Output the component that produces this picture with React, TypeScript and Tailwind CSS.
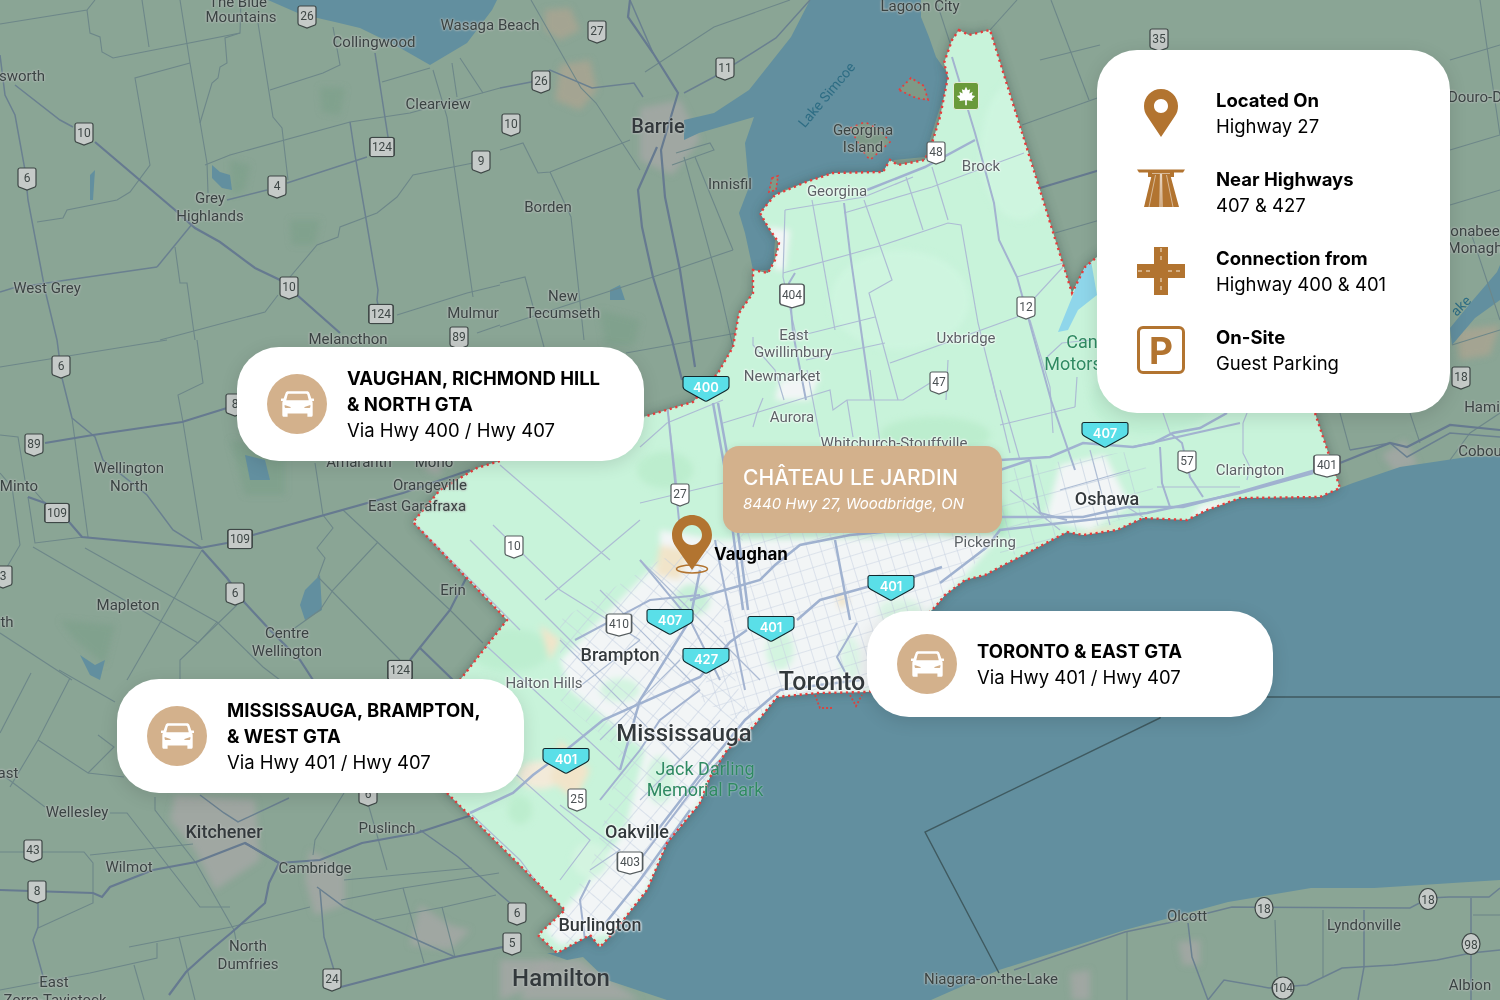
import React from "react";

const gta =
  "M959 30 969 35 990 30 1072 293 1085 267 1097 257 1200 200 1290 350 1315 413 1340 488 1320 497 1240 498 1207 510 1187 520 1143 518 1117 530 1083 535 1067 532 1033 550 1000 567 985 575 965 580 945 595 935 607 900 640 880 690 867 692 817 693 777 697 753 727 727 750 710 777 700 803 667 843 647 890 613 933 600 947 590 935 557 953 538 935 565 910 447 793 420 740 460 680 507 620 413 522 440 490 477 468 640 418 693 402 718 373 733 347 739 313 753 293 753 270 768 273 775 260 779 243 768 227 760 213 775 195 806 182 833 173 883 172 890 160 898 165 925 160 933 140 940 117 948 77 944 63 952 40Z";

const lakeOntario =
  "M1500 456 1467 457 1400 467 1353 483 1340 488 1320 497 1240 498 1207 510 1187 520 1143 518 1117 530 1083 535 1067 532 1033 550 1000 567 985 575 965 580 945 595 935 607 900 640 880 690 867 692 817 693 777 697 753 727 727 750 710 777 700 803 667 843 647 890 613 933 600 947 590 935 557 953 547 953 567 960 583 957 607 980 667 1000 931 1000 999 970 1125 930 1228 902 1311 888 1374 888 1500 880Z";
const lakeSimcoe =
  "M810 0 921 0 921 17 929 37 936 57 950 77 936 120 929 143 925 157 894 160 883 173 833 173 783 190 760 213 775 240 773 270 753 270 745 233 739 213 749 187 745 143 754 117 699 133 684 140 684 120 714 113 749 90 791 37Z";
const georgianBay = "M268 0 300 14 335 22 360 28 395 45 430 65 467 43 492 10 497 0Z";

const dimThin = [
  "M0 24 87 10 95 0",
  "M87 10 90 33 100 37 102 52 113 58 240 33 241 0",
  "M240 33 225 38 227 63 220 67 218 78 212 83 200 123",
  "M180 0 190 63 207 163 208 193",
  "M142 0 149 47",
  "M190 63 135 78 150 165 130 192 117 200 67 210 63 218 37 222",
  "M258 23 273 117 282 128 288 180",
  "M270 90 323 73 340 65 333 27",
  "M205 165 230 155 350 122 410 113 500 88",
  "M382 82 430 68",
  "M433 70 447 117 473 297",
  "M452 63 457 97",
  "M460 58 483 93",
  "M473 163 413 175 397 197 377 213 340 227 338 237 317 245 290 277",
  "M175 247 180 283 187 283 195 340",
  "M278 295 265 312 160 340",
  "M397 315 467 293 500 285",
  "M477 333 500 325",
  "M0 367 167 340",
  "M72 418 88 537",
  "M197 340 203 383 178 395 183 422 202 540",
  "M0 473 12 487 20 545 7 567",
  "M0 435 18 437 25 480 45 503",
  "M28 497 35 543 83 537",
  "M33 547 198 643 217 622",
  "M85 548 217 622 263 667 280 680",
  "M0 633 72 680",
  "M202 550 127 680",
  "M237 605 180 660 180 680",
  "M315 463 323 515 333 528 317 548 325 558 318 577 400 660",
  "M343 510 450 610 483 643",
  "M378 542 333 590 320 610 292 630",
  "M59 670 115 702",
  "M31 673 0 733",
  "M70 678 38 740 10 787",
  "M38 740 88 773 124 777",
  "M98 735 114 747 88 773",
  "M0 773 45 807",
  "M110 813 127 813 200 907 230 907",
  "M0 852 84 852 93 863 93 903 38 928",
  "M90 855 193 844",
  "M155 797 155 810 196 863 234 930 238 950",
  "M129 947 231 927 310 907",
  "M344 793 315 840 313 855",
  "M365 793 387 870",
  "M341 900 403 888 499 873",
  "M344 880 472 868",
  "M375 920 444 907 496 895",
  "M403 888 424 963",
  "M442 907 455 957",
  "M179 937 195 1000",
  "M134 965 145 1003",
  "M157 943 157 958 90 973 0 990",
  "M531 0 581 88 596 103 640 170",
  "M645 72 714 27 790 0",
  "M500 150 523 143 538 173 550 172 630 140",
  "M550 172 571 217 584 340",
  "M676 153 710 143 714 150 672 165",
  "M695 157 733 250",
  "M733 250 653 277 500 327",
  "M500 283 525 277 544 347",
  "M626 353 737 333",
  "M684 157 720 290 733 347",
  "M1017 0 990 30",
  "M936 0 950 43",
  "M1051 0 1089 100",
  "M1022 125 1100 97",
  "M1040 60 1100 45",
  "M1055 233 1100 220",
  "M1127 932 1127 1000",
  "M1275 920 1277 977",
  "M1323 910 1323 977",
  "M1473 915 1500 915",
  "M1340 413 1350 450",
  "M1410 413 1420 443",
  "M1500 413 1470 433 1450 460",
  "M1450 60 1500 45",
  "M1450 150 1500 135 1480 0",
  "M1450 205 1500 190",
  "M1470 230 1500 320",
  "M1452 345 1500 330",
];
const dimMid = [
  "M350 122 355 155 365 213 378 290 377 300 381 320",
  "M375 53 388 137",
  "M287 183 367 157",
  "M227 200 267 190",
  "M157 267 193 223",
  "M0 292 13 288 67 280 157 267",
  "M72 418 95 437 103 460 147 495 173 530 202 548",
  "M0 55 5 95 15 115 25 170 28 200 45 290 57 340 62 378 72 418",
  "M15 85 60 120 73 127",
  "M38 903 38 927 33 940 46 987",
  "M200 795 224 813 238 822 289 798",
  "M420 830 458 857 510 903",
  "M317 887 344 907 455 957",
  "M320 890 324 937 337 980",
  "M1188 923 1192 957 1208 1000 1224 980 1269 988 1307 985 1342 968 1394 965 1437 960 1471 953 1500 950",
  "M1364 910 1364 967 1358 1000",
  "M1471 898 1471 1000",
  "M1014 970 1125 932 1168 923 1208 913 1232 907 1410 908 1429 898 1449 897 1489 897 1500 888",
  "M1350 450 1390 443 1407 457 1450 433 1500 437",
  "M653 53 630 0",
  "M500 88 531 82 550 70 592 88 634 83 643 97",
  "M684 93 714 77 776 38 810 0",
];
const dimMain = [
  "M95 142 175 210 195 228 220 242 255 268 280 280 340 333",
  "M45 443 93 435 182 422 227 408",
  "M28 497 45 503 70 523 82 537 200 548 227 543 253 535 403 493 470 470",
  "M202 550 227 578 245 603 270 630 300 660 313 680",
  "M493 525 450 610 410 660",
  "M420 648 453 680",
  "M0 890 93 893 102 897 110 887 153 870 196 862 245 843 279 863 269 883 265 903 231 933 207 953 186 972 169 995",
  "M245 843 279 863 320 860 362 843 417 833 472 815",
  "M341 987 455 957 503 947",
  "M630 0 628 17 653 53 678 93 661 150 665 197 680 270 695 367",
  "M657 147 638 190 642 227 653 277 672 340 682 380",
  "M1340 463 1390 443 1407 447 1450 425 1500 430",
  "M994 202 1040 188 1100 170",
];

const brightThin = [
  "M785 210 864 197 913 177",
  "M844 213 932 187 1024 153",
  "M785 210 783 277 797 340",
  "M783 273 883 245 948 223 961 225 978 323 997 400",
  "M812 200 835 330",
  "M864 200 892 280 869 293 898 400",
  "M906 177 923 230",
  "M932 167 948 220",
  "M890 363 1017 317 1063 267",
  "M1017 277 1063 263",
  "M753 337 753 345 775 370 784 400",
  "M795 337 875 317",
  "M806 360 885 343",
  "M948 360 946 400",
  "M667 403 677 487",
  "M723 423 830 390 833 410 847 400 903 400 930 383",
  "M753 427 757 413 763 398",
  "M807 370 820 437",
  "M847 400 853 437",
  "M870 370 880 443",
  "M990 370 1010 453",
  "M1000 390 1020 460",
  "M640 447 667 423 723 400",
  "M640 503 723 483",
  "M413 522 520 630",
  "M493 525 560 590 640 640",
  "M500 465 610 560",
  "M470 540 540 610 590 660",
  "M480 640 545 700 620 770",
  "M545 600 640 520",
  "M560 805 620 850 590 870",
  "M500 760 590 840 560 880",
  "M472 815 520 860 550 900",
  "M1030 320 1050 387 1053 433",
  "M1047 357 1062 343 1090 340",
  "M1075 407 1000 425",
  "M1077 377 1075 407",
  "M1163 413 1170 433",
  "M1247 413 1243 423",
  "M1157 487 1240 487",
  "M1243 423 1243 453 1250 467 1247 480",
  "M1127 507 1143 517",
  "M1033 503 1047 520",
  "M600 590 700 690",
  "M560 640 680 760",
  "M640 560 760 680",
  "M575 690 640 640",
  "M600 740 680 660",
  "M640 800 720 720",
  "M1010 490 1060 530",
  "M1090 450 1110 525",
  "M1060 490 1130 470",
];
const brightMid = [
  "M952 57 975 133 994 203 999 240 1017 277 1051 400 1075 470",
  "M850 253 860 323 871 400",
  "M844 203 850 253",
  "M795 273 789 283 793 333 806 400",
  "M667 403 680 530",
  "M1160 447 1162 483 1170 507",
  "M1170 433 1182 443 1190 477 1203 497",
  "M1030 460 1040 513 1067 520",
  "M1133 447 1240 423",
  "M600 800 640 750 660 720 700 690",
  "M590 880 580 900 585 940",
  "M640 860 700 780 745 735",
  "M857 623 837 657 845 672",
  "M640 560 690 620 720 680",
  "M575 640 650 600 700 595",
  "M715 540 735 640 745 690",
];
const brightMain = [
  "M713 403 725 470 743 610",
  "M718 403 730 470 748 610",
  "M867 190 925 167 975 140",
  "M470 813 513 793 533 775 560 755 603 720 700 677 730 642 747 630",
  "M797 620 820 600 867 587 913 577 942 567",
  "M940 583 987 547 1000 530 1070 522 1147 513 1240 493 1313 473",
  "M1000 517 1083 517 1127 507 1183 507 1240 492 1340 463",
  "M1000 460 1050 457 1083 443 1133 447 1153 443 1173 433 1200 428 1227 413",
  "M1000 470 1030 460",
  "M620 770 640 700 690 620 700 570",
  "M690 600 760 580 775 565 800 545 850 535 960 525",
  "M600 930 640 880 690 810",
  "M650 840 700 775 745 720 780 690 860 680",
  "M835 540 850 620",
];

const urban = [
  "M660 530 720 540 1000 535 970 570 935 607 900 640 880 690 780 697 753 727 727 750 710 777 700 803 667 843 647 890 613 933 560 945 545 930 590 880 625 830 645 750 570 690 560 660 620 600 660 560Z",
  "M1060 465 1105 455 1130 505 1090 530 1045 520Z",
  "M1218 500 1240 505 1190 520 1200 505Z",
  "M780 380 820 375 810 400 775 400Z",
  "M768 227 790 230 785 270 775 270Z",
];
const beige = [
  "M660 545 690 550 680 580 655 575Z",
  "M560 740 590 770 575 800 550 780Z",
  "M540 625 560 640 550 660Z",
  "M835 590 850 600 840 610Z",
  "M1075 535 1120 525 1100 538Z",
  "M1210 510 1235 500 1205 520Z",
];
const greyPatches = [
  "M640 108 680 100 700 140 672 175 640 160Z",
  "M175 795 255 800 260 860 215 890 195 850 170 820Z",
  "M310 850 345 870 345 905 315 915 305 880Z",
  "M1070 973 1090 970 1090 1000 1072 1000Z",
  "M1178 942 1200 940 1200 965 1183 965Z",
  "M540 960 580 960 640 1000 520 1000Z",
  "M1382 455 1405 440 1418 465 1395 472Z",
  "M430 400 450 410 440 475 425 470Z",
  "M555 960 540 985 500 1000 500 960Z",
  "M420 905 450 925 470 930 450 950 410 945Z",
];
const tanPatches = [
  "M545 10 570 8 580 30 560 40 545 30Z",
  "M560 65 590 60 597 90 580 110 555 100Z",
  "M1455 330 1500 325 1490 355 1460 360Z",
];
const forest = [
  "M230 160 250 165 245 190 232 195Z",
  "M320 87 345 88 340 115 322 112Z",
  "M290 220 320 220 315 245 292 245Z",
  "M230 440 285 450 285 495 245 495Z",
  "M60 620 115 625 105 665 75 640Z",
  "M600 310 640 320 635 345 605 345Z",
];
const smallLakes = [
  "M212 165 220 172 230 175 232 190 222 188 212 178Z",
  "M245 455 265 460 270 480 250 480Z",
  "M90 175 95 170 93 200 90 200Z",
  "M305 590 320 575 322 610 305 620 300 605Z",
  "M80 655 95 665 105 660 100 680 90 675Z",
  "M610 290 620 285 625 300 610 300Z",
];

type LabelT = [string, number, number, number?, string?];
const labels: LabelT[] = [
  ["The Blue", 238, 2], ["Mountains", 241, 17], ["Wasaga Beach", 490, 25], ["Collingwood", 374, 42],
  ["Lagoon City", 920, 6], ["Clearview", 438, 104], ["Barrie", 658, 126, 20, "m"], ["sworth", 22, 76],
  ["Grey", 210, 198], ["Highlands", 210, 216], ["Borden", 548, 207], ["Innisfil", 730, 184],
  ["Georgina", 863, 130], ["Island", 863, 147], ["West Grey", 47, 288], ["New", 563, 296],
  ["Tecumseth", 563, 313], ["Mulmur", 473, 313], ["Melancthon", 348, 339], ["Wellington", 129, 468],
  ["North", 129, 486], ["Minto", 19, 486], ["Amaranth", 359, 462], ["Mono", 434, 462],
  ["Erin", 453, 590], ["Mapleton", 128, 605], ["Centre", 287, 633], ["Wellington", 287, 651],
  ["th", 7, 622], ["Kitchener", 224, 832, 18, "m"], ["Puslinch", 387, 828], ["Wellesley", 77, 812],
  ["Wilmot", 129, 867], ["Cambridge", 315, 868], ["North", 248, 946], ["Dumfries", 248, 964],
  ["East", 54, 982], ["Zorra-Tavistock", 55, 1000], ["ast", 8, 773], ["Olcott", 1187, 916],
  ["Lyndonville", 1364, 925], ["Albion", 1470, 985], ["Niagara-on-the-Lake", 991, 979],
  ["Douro-D", 1475, 97], ["onabee", 1475, 231], ["Monagh", 1475, 248], ["Hami", 1482, 407],
  ["Cobou", 1480, 451], ["Hamilton", 561, 978, 24, "m"], ["Orangeville", 430, 485], ["East Garafraxa", 417, 506],
];
const brightLabels: LabelT[] = [
  ["Georgina", 837, 191], ["Brock", 981, 166], ["East", 794, 335], ["Gwillimbury", 793, 352],
  ["Newmarket", 782, 376], ["Uxbridge", 966, 338], ["Aurora", 792, 417], ["Whitchurch-Stouffville", 894, 443],
  ["Clarington", 1250, 470], ["Oshawa", 1107, 499, 18, "m"],
  ["Pickering", 985, 542], ["Brampton", 620, 655, 18, "m"], ["Halton Hills", 544, 683], ["Toronto", 822, 681, 25, "m"],
  ["Mississauga", 684, 733, 24, "m"], ["Oakville", 637, 832, 18, "m"], ["Burlington", 600, 925, 18, "m"],
];

type ShieldT = [string, number, number, number?, number?];
const dimShields: ShieldT[] = [
  ["26", 307, 17], ["27", 597, 32], ["26", 541, 82], ["11", 725, 69], ["10", 84, 134], ["10", 511, 125],
  ["124", 382, 147, 27, 21], ["9", 481, 162], ["6", 27, 179], ["4", 277, 187], ["10", 289, 288],
  ["124", 381, 314, 27, 21], ["89", 459, 338], ["6", 61, 367], ["89", 34, 445], ["8", 235, 405],
  ["109", 57, 513, 27, 21], ["109", 240, 539, 27, 21], ["6", 235, 594], ["3", 3, 577],
  ["124", 400, 670, 27, 21], ["43", 33, 851], ["8", 37, 892], ["24", 332, 980], ["6", 517, 914],
  ["5", 512, 944], ["35", 1159, 40], ["18", 1461, 378], ["6", 368, 795],
];
const whiteShields: ShieldT[] = [
  ["48", 936, 153], ["404", 792, 296, 27, 26], ["12", 1026, 308], ["47", 939, 383], ["27", 680, 495],
  ["10", 514, 547], ["410", 619, 625, 28, 24], ["25", 577, 800], ["403", 630, 863, 28, 24], ["57", 1187, 462],
  ["401", 1327, 466, 29, 24],
];
const cyanShields: ShieldT[] = [
  ["400", 706, 389], ["407", 1105, 435], ["401", 891, 588], ["407", 670, 622], ["401", 771, 629],
  ["427", 706, 661], ["401", 566, 761],
];
const roundShields: ShieldT[] = [
  ["18", 1264, 908, 20, 23], ["18", 1428, 899, 20, 23], ["98", 1471, 944, 20, 23], ["104", 1283, 988, 24, 24],
];

const MapLabel = ({ item, bright }: { item: LabelT; bright?: boolean }) => {
  const [t, x, y, size = 15, w] = item;
  return (
    <span
      className={`absolute -translate-x-1/2 -translate-y-1/2 whitespace-nowrap font-[Roboto,sans-serif] leading-none ${
        bright
          ? "text-[#5c6266] [text-shadow:0_0_2px_#fff,0_0_2px_#fff,0_0_3px_#fff]"
          : "text-[#3a4443] [text-shadow:0_0_2px_#b3b9b6,0_0_2px_#b3b9b6,0_0_3px_#b3b9b6]"
      } ${w === "m" ? "font-medium !text-[#33393c]" : ""}`}
      style={{ left: x, top: y, fontSize: size }}
    >
      {t}
    </span>
  );
};

const Shield = ({ item, kind }: { item: ShieldT; kind: "dim" | "white" | "cyan" | "round" }) => {
  const [t, x, y, w, h] = item;
  const width = w ?? (kind === "cyan" ? 48 : 20);
  const height = h ?? (kind === "cyan" ? 27 : 24);
  return (
    <div
      className="absolute -translate-x-1/2 -translate-y-1/2 flex items-center justify-center"
      style={{ left: x, top: y, width, height }}
    >
      <svg className="absolute inset-0 w-full h-full" viewBox={kind === "cyan" ? "0 0 48 27" : "0 0 20 24"} preserveAspectRatio="none">
        {kind === "cyan" && (
          <path d="M3 1H45C46.5 1 47 2 47 3V11C47 13 46 14 44 15L26 25C25 25.7 23 25.7 22 25L4 15C2 14 1 13 1 11V3C1 2 1.5 1 3 1Z" fill="#5adfe8" stroke="#12282c" strokeWidth="1.1" />
        )}
        {kind === "round" && <ellipse cx="10" cy="12" rx="9" ry="11" fill="#c5cac8" stroke="#3e4746" strokeWidth="1.2" />}
        {(kind === "dim" || kind === "white") && (
          <path
            d={h === 21 ? "M3 1H17C18 1 19 2 19 3V21C19 22 18 23 17 23H3C2 23 1 22 1 21V3C1 2 2 1 3 1Z" : "M3 1H17C18 1 19 2 19 3V18C19 19 18.5 19.5 18 20L10 23L2 20C1.5 19.5 1 19 1 18V3C1 2 2 1 3 1Z"}
            fill={kind === "dim" ? "#c5cac8" : "#fff"}
            stroke={kind === "dim" ? "#3e4746" : "#555c5e"}
            strokeWidth="1.2"
          />
        )}
      </svg>
      {kind === "cyan" ? (
        <span className="relative pb-[3px] font-[Inter,sans-serif] text-[13px] font-semibold text-white">{t}</span>
      ) : (
        <span className={`relative font-[Roboto,sans-serif] text-[12px] ${kind === "white" ? "text-[#4b5154]" : "text-[#3e4746]"} ${kind === "round" ? "" : "pb-[2px]"}`}>{t}</span>
      )}
    </div>
  );
};

const MapBackground = () => (
  <div className="absolute inset-0 blur-[0.4px]">
    <svg className="absolute inset-0" width="1500" height="1000" viewBox="0 0 1500 1000">
      <defs>
        <clipPath id="gtaClip">
          <path d={gta} />
        </clipPath>
        <filter id="soft" x="-10%" y="-10%" width="120%" height="120%">
          <feGaussianBlur stdDeviation="6" />
        </filter>
        <filter id="patch" x="-10%" y="-10%" width="120%" height="120%">
          <feGaussianBlur stdDeviation="3" />
        </filter>
        <pattern id="gridT" width="13" height="13" patternUnits="userSpaceOnUse" patternTransform="rotate(-17)">
          <path d="M13 0H0V13" fill="none" stroke="#c8d2e2" strokeWidth="1.1" />
        </pattern>
        <pattern id="gridM" width="16" height="16" patternUnits="userSpaceOnUse" patternTransform="rotate(40)">
          <path d="M16 0H0V16" fill="none" stroke="#c2cde0" strokeWidth="1.1" />
        </pattern>
        <pattern id="gridD" width="22" height="22" patternUnits="userSpaceOnUse" patternTransform="rotate(-15)">
          <path d="M22 0H0V22" fill="none" stroke="#b6c5da" strokeWidth="1" />
        </pattern>
      </defs>

      <rect width="1500" height="1000" fill="#8aa595" />
      <g filter="url(#patch)">
        {forest.map((d, i) => (
          <path key={i} d={d} fill="#7c9e88" opacity="0.6" />
        ))}
        {greyPatches.map((d, i) => (
          <path key={i} d={d} fill="#a3a7a4" opacity="0.85" />
        ))}
        {tanPatches.map((d, i) => (
          <path key={i} d={d} fill="#a4a492" />
        ))}
      </g>
      {smallLakes.map((d, i) => (
        <path key={i} d={d} fill="#628f9f" />
      ))}
      <path d={georgianBay} fill="#628f9f" />
      <path d={lakeSimcoe} fill="#628f9f" />
      <path d="M1450 328 1473 300 1497 272 1500 265 1500 300 1475 318 1452 345Z" fill="#628f9f" />
      <path d={lakeOntario} fill="#628f9f" />
      <path d="M1500 697H1163L1160 718 925 832 999 973" fill="none" stroke="#3f5a60" strokeWidth="1.4" />

      {dimThin.map((d, i) => (
        <path key={i} d={d} fill="none" stroke="#6d8789" strokeWidth="1.1" />
      ))}
      {dimMid.map((d, i) => (
        <path key={i} d={d} fill="none" stroke="#6a8090" strokeWidth="1.5" />
      ))}
      {dimMain.map((d, i) => (
        <path key={i} d={d} fill="none" stroke="#667a90" strokeWidth="2.2" />
      ))}

      <path d={gta} fill="#2c4440" opacity="0.45" filter="url(#soft)" />
      <path d={gta} fill="#c8f3da" />

      <g clipPath="url(#gtaClip)">
        <g filter="url(#patch)">
          <ellipse cx="900" cy="300" rx="70" ry="50" fill="#cef5df" />
          <ellipse cx="1020" cy="150" rx="40" ry="70" fill="#cef5df" />
          <ellipse cx="850" cy="160" rx="35" ry="12" fill="#bdeed0" />
          <ellipse cx="1150" cy="400" rx="60" ry="35" fill="#bdeed0" opacity="0.6" />
          <ellipse cx="935" cy="435" rx="55" ry="18" fill="#bcedce" />
          <ellipse cx="665" cy="470" rx="28" ry="18" fill="#bcedce" />
          <ellipse cx="770" cy="480" rx="40" ry="30" fill="#c1f0d3" />
          <ellipse cx="975" cy="520" rx="35" ry="26" fill="#b1e9c6" />
          <ellipse cx="510" cy="650" rx="40" ry="22" fill="#bdeed0" />
          <ellipse cx="520" cy="810" rx="12" ry="14" fill="#bcedce" />
          {urban.map((d, i) => (
            <path key={i} d={d} fill="#f2f5f6" />
          ))}
          <ellipse cx="620" cy="690" rx="20" ry="12" fill="#d3f4e0" />
          <ellipse cx="780" cy="650" rx="14" ry="20" fill="#d3f4e0" />
          <ellipse cx="850" cy="660" rx="10" ry="24" fill="#dcf5e6" />
          <ellipse cx="900" cy="610" rx="22" ry="12" fill="#dcf5e6" />
          <ellipse cx="660" cy="780" rx="14" ry="24" fill="#d3f4e0" />
          <ellipse cx="590" cy="860" rx="18" ry="18" fill="#d3f4e0" />
          <ellipse cx="692" cy="600" rx="18" ry="16" fill="#c8f0d8" />
          <ellipse cx="540" cy="775" rx="22" ry="14" fill="#f2ead9" />
          {beige.map((d, i) => (
            <path key={i} d={d} fill="#f1e4c9" />
          ))}
        </g>
        <path d="M745 530 1000 530 970 570 935 607 900 640 880 690 780 697 753 727 700 700 720 640Z" fill="url(#gridT)" />
        <path d="M560 620 660 560 745 530 720 640 753 727 727 750 710 777 700 803 667 843 647 890 613 933 560 945 545 930 590 870 610 800 620 750 560 700Z" fill="url(#gridM)" />
        <path d="M1000 470 1140 450 1160 510 1080 530 1000 560Z" fill="url(#gridD)" />
        <path d="M1090 255 1082 268 1073 295 1062 322 1058 332 1068 330 1078 310 1097 295Z" fill="#8fd6ea" />
        {brightThin.map((d, i) => (
          <path key={i} d={d} fill="none" stroke="#adbcd4" strokeWidth="1.2" />
        ))}
        {brightMid.map((d, i) => (
          <path key={i} d={d} fill="none" stroke="#a3b3d0" strokeWidth="2" />
        ))}
        {brightMain.map((d, i) => (
          <path key={i} d={d} fill="none" stroke="#a0b2d0" strokeWidth="2.5" />
        ))}
      </g>

      <path d={gta} fill="none" stroke="#e83c3c" strokeWidth="2.4" strokeDasharray="2.2 3.6" />
      <path d="M899 90 911 78 924 86 928 100 916 98Z" fill="#7e9a88" stroke="#e83c3c" strokeWidth="1.8" strokeDasharray="2 3" />
      <path d="M772 178 778 176 776 190 769 192Z" fill="#7e9a88" stroke="#e83c3c" strokeWidth="1.6" strokeDasharray="2 2.5" />
      <path d="M850 128 865 122 880 130 890 142 870 160 862 150Z" fill="#7e9a88" stroke="#e83c3c" strokeWidth="1.6" strokeDasharray="2 4" />
      <path d="M815 695 820 708 832 708M850 695 856 706 862 695" fill="none" stroke="#d9443f" strokeWidth="1.8" strokeDasharray="2 2" />
    </svg>

    {labels.map((l, i) => (
      <MapLabel key={i} item={l} />
    ))}
    {brightLabels.map((l, i) => (
      <MapLabel key={i} item={l} bright />
    ))}
    <span className="absolute left-[827px] top-[95px] -translate-x-1/2 -translate-y-1/2 -rotate-[50deg] whitespace-nowrap font-[Roboto,sans-serif] text-[14px] text-[#2e6d84]">
      Lake Simcoe
    </span>
    <span className="absolute left-[1461px] top-[306px] -translate-x-1/2 -translate-y-1/2 -rotate-[45deg] font-[Roboto,sans-serif] text-[14px] text-[#2e6d84]">
      ake
    </span>
    {[
      ["Jack Darling", 705, 769],
      ["Memorial Park", 705, 790],
      ["Can", 1082, 342],
      ["Motors", 1073, 364],
    ].map(([t, x, y]) => (
      <span
        key={t as string}
        className="absolute -translate-x-1/2 -translate-y-1/2 whitespace-nowrap font-[Roboto,sans-serif] text-[18px] leading-none text-[#2f8a62] [text-shadow:0_0_2px_#ffffffb0]"
        style={{ left: x as number, top: y as number }}
      >
        {t}
      </span>
    ))}
    {dimShields.map((s, i) => (
      <Shield key={i} item={s} kind="dim" />
    ))}
    {whiteShields.map((s, i) => (
      <Shield key={i} item={s} kind="white" />
    ))}
    {roundShields.map((s, i) => (
      <Shield key={i} item={s} kind="round" />
    ))}
    <div className="absolute left-[953px] top-[82px] flex h-[28px] w-[26px] items-center justify-center rounded-[3px] border border-[#e5ecd9] bg-[#6a9a3a]">
      <svg viewBox="0 0 24 24" className="h-[20px] w-[20px]" fill="#fff">
        <path d="M12 1 14 5 17 4 16 9 20 7 19 11 23 12 19 16 20 18 13 17 13 23 11 23 11 17 4 18 5 16 1 12 5 11 4 7 8 9 7 4 10 5Z" />
      </svg>
    </div>
    {cyanShields.map((s, i) => (
      <Shield key={i} item={s} kind="cyan" />
    ))}
  </div>
);

const CarIcon = () => (
  <svg viewBox="0 0 100 78" className="h-[26px] w-[33px]" fill="#fff" fillRule="evenodd">
    <path d="M22 0H78C82 0 85 2 86 6L92 22H98C100 22 100 24 100 26V30H94C96 32 96 36 96 38V72C96 76 94 78 90 78H80V68H20V78H10C6 78 4 76 4 72V38C4 36 4 32 6 30H0V26C0 24 0 22 2 22H8L14 6C15 2 18 0 22 0ZM24 8C22 8 21 9 20 11L16 28H84L80 11C79 9 78 8 76 8ZM11 42V47C11 49 13 51 15 51H29V48ZM89 42V47C89 49 87 51 85 51H71V48Z" />
  </svg>
);

const RouteCard = ({ title, via, className }: { title: string[]; via: string; className: string }) => (
  <div className={`absolute flex items-center rounded-[42px] bg-white pl-[30px] shadow-[0_4px_18px_rgba(0,0,0,0.12)] ${className}`}>
    <div className="flex h-[60px] w-[60px] shrink-0 items-center justify-center rounded-full bg-[#d3b18c]">
      <CarIcon />
    </div>
    <div className="ml-[20px] text-[18.5px] leading-[26px] text-black">
      {title.map((t) => (
        <div key={t} className="text-[18.5px] font-bold">
          {t}
        </div>
      ))}
      <div>{via}</div>
    </div>
  </div>
);

const PinIcon = ({ className }: { className: string }) => (
  <svg viewBox="0 0 34 48" className={className} fill="#b27430" fillRule="evenodd">
    <path d="M17 0C7.6 0 0 7.6 0 17C0 21 1 24 3 27L17 48L31 27C33 24 34 21 34 17C34 7.6 26.4 0 17 0ZM17 10C21 10 24 13 24 17C24 21 21 24 17 24C13 24 10 21 10 17C10 13 13 10 17 10Z" />
  </svg>
);

const HighwayIcon = () => (
  <svg viewBox="0 0 48 38" className="mb-[8px] h-[38px] w-[48px]">
    <path d="M0 0.500H48L46 3.500H37V8H33V4.500H15V8H11V3.500H2Z" fill="#b27430" />
    <path d="M15 5H33L42 38H7Z" fill="#b27430" />
    <path d="M23.400 5 23 38M24.600 5 25 38" stroke="#fff" strokeWidth="0.8" fill="none" />
    <path d="M18.500 6 12 38M29.500 6 36 38" stroke="#fff" strokeWidth="0.5" fill="none" />
  </svg>
);

const CrossIcon = () => (
  <svg viewBox="0 0 48 48" className="h-12 w-12">
    <path d="M17 0H31V17H48V31H31V48H17V31H0V17H17Z" fill="#b27430" />
    <path d="M24 1V17M24 31V47M1 24H17M31 24H47" stroke="#f6ead9" strokeWidth="1" strokeDasharray="4 4" fill="none" />
  </svg>
);

const features = [
  { a: "Located On", b: "Highway 27", icon: <PinIcon className="h-[48px] w-[34px]" /> },
  { a: "Near Highways", b: "407 & 427", icon: <HighwayIcon /> },
  { a: "Connection from", b: "Highway 400 & 401", icon: <CrossIcon /> },
  {
    a: "On-Site",
    b: "Guest Parking",
    icon: (
      <div className="flex h-12 w-12 items-center justify-center rounded-[6px] border-[3px] border-[#b27430] text-[37px] font-bold leading-none text-[#b27430]">
        P
      </div>
    ),
  },
];

export default function App() {
  return (
    <div className="relative h-[1000px] w-[1500px] overflow-hidden bg-[#8aa595] font-[Inter,sans-serif]">
      <MapBackground />

      {/* site pin */}
      <div className="absolute left-[672px] top-[515px]">
        <svg viewBox="0 0 40 60" className="h-[60px] w-[40px]">
          <ellipse cx="20" cy="54" rx="15.5" ry="4" fill="none" stroke="#b27430" strokeWidth="1.5" />
          <path
            fill="#b27430"
            fillRule="evenodd"
            d="M20 0C9 0 0 9 0 20C0 25 1.500 28 4 32L20 55L36 32C38.500 28 40 25 40 20C40 9 31 0 20 0ZM20 10C25.500 10 30 14.500 30 20C30 25.500 25.500 30 20 30C14.500 30 10 25.500 10 20C10 14.500 14.500 10 20 10Z"
          />
        </svg>
      </div>
      <span className="absolute left-[714px] top-[543px] text-[17px] font-bold leading-[22px] text-black">Vaughan</span>

      <div className="absolute left-[723px] top-[446px] flex h-[87px] w-[279px] flex-col justify-center rounded-[16px] bg-[#d3b18c] pl-[20px] text-white shadow-[0_2px_8px_rgba(0,0,0,0.12)]">
        <div className="text-[21px] font-medium leading-[28px] tracking-[0.1px]">CHÂTEAU LE JARDIN</div>
        <div className="text-[15px] italic leading-[24px]">8440 Hwy 27, Woodbridge, ON</div>
      </div>

      <RouteCard className="left-[237px] top-[347px] h-[114px] w-[407px]" title={["VAUGHAN, RICHMOND HILL", "& NORTH GTA"]} via="Via Hwy 400 / Hwy 407" />
      <RouteCard className="left-[117px] top-[679px] h-[114px] w-[407px]" title={["MISSISSAUGA, BRAMPTON,", "& WEST GTA"]} via="Via Hwy 401 / Hwy 407" />
      <RouteCard className="left-[867px] top-[611px] h-[106px] w-[406px]" title={["TORONTO & EAST GTA"]} via="Via Hwy 401 / Hwy 407" />

      <div className="absolute left-[1097px] top-[50px] flex h-[363px] w-[353px] flex-col justify-between rounded-[40px] bg-white px-[40px] py-[37px] shadow-[0_4px_18px_rgba(0,0,0,0.12)]">
        {features.map((f) => (
          <div key={f.a} className="flex h-[52px] items-center">
            <div className="flex w-[48px] shrink-0 justify-center">{f.icon}</div>
            <div className="ml-[31px] whitespace-nowrap text-[18.5px] leading-[26px] text-black">
              <div className="text-[18.5px] font-bold">{f.a}</div>
              <div>{f.b}</div>
            </div>
          </div>
        ))}
      </div>
    </div>
  );
}
